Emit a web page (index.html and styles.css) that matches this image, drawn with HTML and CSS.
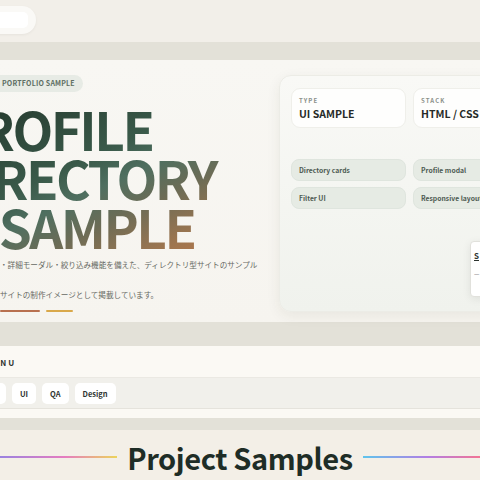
FILE: index.html
```html
<!DOCTYPE html>
<html>

<head>
    <meta charset="UTF-8">
    <title>Profile Directory Sample</title>

    <link rel="stylesheet" href="styles.css">

</head>

<body>

    <div id="page">
        <header class="topbar">
            <div class="search-pill">
                <div class="search-field"></div>
            </div>
        </header>

        <section class="hero">
            <div class="hero-main">
                <span class="eyebrow">PORTFOLIO SAMPLE</span>
                <h1 class="hero-title">
                    <span class="line line-1">PROFILE</span>
                    <span class="line line-2">DIRECTORY</span>
                    <span class="line line-3">UI SAMPLE</span>
                </h1>
                <p class="hero-text">・詳細モーダル・絞り込み機能を備えた、ディレクトリ型サイトのサンプル</p>
                <p class="hero-text">サイトの制作イメージとして掲載しています。</p>
                <div class="accent-bars">
                    <span class="bar bar-rust"></span>
                    <span class="bar bar-gold"></span>
                </div>
            </div>

            <div class="hero-card">
                <div class="info-grid">
                    <div class="info-box">
                        <div class="info-label">TYPE</div>
                        <div class="info-value">UI SAMPLE</div>
                    </div>
                    <div class="info-box">
                        <div class="info-label">STACK</div>
                        <div class="info-value">HTML / CSS / JS</div>
                    </div>
                </div>

                <div class="chip-grid">
                    <div class="chip">Directory cards</div>
                    <div class="chip">Profile modal</div>
                    <div class="chip">Filter UI</div>
                    <div class="chip">Responsive layout</div>
                </div>

                <!-- floating preview card -->
                <div class="mini-card">
                    <div class="mini-name">S</div>
                    <div class="mini-line">—</div>
                </div>
            </div>
        </section>

        <nav class="menu">
            <div class="menu-head">MENU</div>
            <div class="menu-tools">
                <button class="tool-btn tool-all">All</button>
                <button class="tool-btn">UI</button>
                <button class="tool-btn">QA</button>
                <button class="tool-btn">Design</button>
            </div>
        </nav>

        <section class="samples">
            <div class="section-title">
                <span class="rule rule-left"></span>
                <h2>Project Samples</h2>
                <span class="rule rule-right"></span>
            </div>
        </section>
    </div>

</body>

</html>
```

FILE: styles.css
```css
html,
body {
    margin: 0;
    width: 480px;
    height: 480px;
    overflow: hidden;
}

body {
    background-color: #e3e1d8;
    font-family: "Noto Sans CJK JP", "Noto Sans", sans-serif;
    color: #262b28;
}

#page {
    display: flex;
    flex-direction: column;
    width: 480px;
}

/* top bar */
.topbar {
    height: 42px;
    background-color: #f2efe9;
    padding-top: 6px;
    box-sizing: border-box;
}

.search-pill {
    width: 56px;
    height: 28px;
    margin-left: -20px;
    padding: 6px 8px 6px 6px;
    box-sizing: border-box;
    border-radius: 14px;
    background-color: #faf9f6;
    box-shadow: 0 1px 3px rgba(0, 0, 0, 0.05);
}

.search-field {
    height: 16px;
    border-radius: 5px;
    background-color: #ffffff;
}

/* hero */
.hero {
    display: flex;
    height: 262px;
    margin-top: 18px;
    padding-top: 15px;
    box-sizing: border-box;
    background: linear-gradient(180deg, #f8f7f3 0%, #f6f4ef 100%);
}

.hero-main {
    width: 268px;
    flex-shrink: 0;
}

.eyebrow {
    display: block;
    width: fit-content;
    height: 17px;
    line-height: 17px;
    margin-left: -20px;
    padding: 0 8px 0 22px;
    border-radius: 9px;
    background-color: #e7ebe5;
    color: #5d6e63;
    font-size: 7px;
    font-weight: 700;
    letter-spacing: 0.2px;
}

.hero-title {
    margin: 12px 0 0;
    font-size: 53px;
    line-height: 49px;
    font-weight: 700;
    letter-spacing: -2.5px;
    background: linear-gradient(155deg, #263b2f 0%, #3a5a4a 35%, #4f6f60 48%, #6c6c56 62%, #9b7550 80%, #c57a48 100%);
    -webkit-background-clip: text;
    background-clip: text;
    color: transparent;
}

.line {
    display: block;
    white-space: nowrap;
}

.line-1 {
    margin-left: -54px;
}

.line-2 {
    margin-left: -58px;
}

.line-3 {
    margin-left: -63px;
}

.hero-text {
    margin: 7px 0 0 0;
    font-size: 7.6px;
    line-height: 14px;
    color: #666963;
    white-space: nowrap;
}

.hero-text + .hero-text {
    margin-top: 16px;
}

.accent-bars {
    display: flex;
    gap: 6px;
    margin-top: 8px;
}

.bar {
    height: 2px;
    border-radius: 1px;
}

.bar-rust {
    width: 40px;
    background-color: #b8704f;
}

.bar-gold {
    width: 27px;
    background-color: #d9a84a;
}

/* right card */
.hero-card {
    position: relative;
    width: 250px;
    height: 237px;
    flex-shrink: 0;
    margin-left: 11px;
    padding: 12px 11px;
    box-sizing: border-box;
    border: 1px solid #ecece6;
    border-radius: 12px;
    background: linear-gradient(180deg, #f9f9f6 0%, #f0f2ed 100%);
    box-shadow: 0 4px 14px rgba(60, 50, 30, 0.07);
}

.info-grid,
.chip-grid {
    display: grid;
    grid-template-columns: 115px 115px;
    gap: 6px 7px;
}

.info-box {
    height: 40px;
    padding: 7px 7px 0;
    box-sizing: border-box;
    border: 1px solid #efefea;
    border-radius: 9px;
    background-color: #fefefd;
}

.info-label {
    font-size: 6px;
    font-weight: 700;
    letter-spacing: 1.1px;
    color: #8b918a;
    line-height: 10px;
}

.info-value {
    margin-top: 1px;
    font-size: 10.5px;
    font-weight: 700;
    line-height: 14px;
    white-space: nowrap;
}

.chip-grid {
    margin-top: 31px;
}

.chip {
    height: 22px;
    line-height: 20px;
    padding-left: 7px;
    box-sizing: border-box;
    border: 1px solid #dfe5de;
    border-radius: 8px;
    background-color: #e6ebe4;
    color: #4d5a52;
    font-size: 6.8px;
    font-weight: 700;
    white-space: nowrap;
}

.mini-card {
    position: absolute;
    left: 190px;
    top: 165px;
    width: 50px;
    height: 56px;
    padding: 8px 3px;
    box-sizing: border-box;
    border: 1px solid #e1e1dc;
    border-radius: 4px;
    background-color: #ffffff;
    box-shadow: 0 2px 8px rgba(0, 0, 0, 0.08);
}

.mini-name {
    font-size: 8px;
    font-weight: 700;
    color: #2c332f;
    text-decoration: underline;
}

.mini-line {
    margin-top: 8px;
    font-size: 6px;
    color: #5a605c;
}

/* menu */
.menu {
    height: 72px;
    margin-top: 24px;
    background-color: #fbf9f4;
}

.menu-head {
    height: 30px;
    line-height: 34px;
    margin-left: -16px;
    font-size: 8px;
    font-weight: 700;
    letter-spacing: 2.2px;
    color: #2f3531;
}

.menu-tools {
    display: flex;
    align-items: center;
    gap: 6px;
    height: 32px;
    margin-top: 1px;
    box-sizing: border-box;
    border-top: 1px solid #ebe9e3;
    border-bottom: 1px solid #e5e3dc;
    background-color: #f1f0eb;
}

.tool-btn {
    height: 21px;
    padding: 0 8px;
    border: none;
    border-radius: 5px;
    background-color: #ffffff;
    font-family: inherit;
    font-size: 7.5px;
    font-weight: 700;
    color: #2f3531;
    cursor: pointer;
}

.tool-all {
    width: 28px;
    margin-left: -22px;
}

/* project samples */
.samples {
    height: 50px;
    margin-top: 12px;
    padding-top: 9px;
    box-sizing: border-box;
    background-color: #f3efe7;
}

.section-title {
    display: flex;
    align-items: center;
    gap: 10px;
}

.section-title h2 {
    margin: 0;
    font-size: 29px;
    line-height: 36px;
    font-weight: 700;
    letter-spacing: -0.4px;
    color: #1e2d26;
    white-space: nowrap;
}

.rule {
    flex: 1;
    height: 1.5px;
}

.rule-left {
    background: linear-gradient(90deg, #9a82e0 0%, #e57cc0 55%, #ecd45c 100%);
}

.rule-right {
    background: linear-gradient(90deg, #5ec4ec 0%, #b27ee4 55%, #f27494 100%);
}
```
